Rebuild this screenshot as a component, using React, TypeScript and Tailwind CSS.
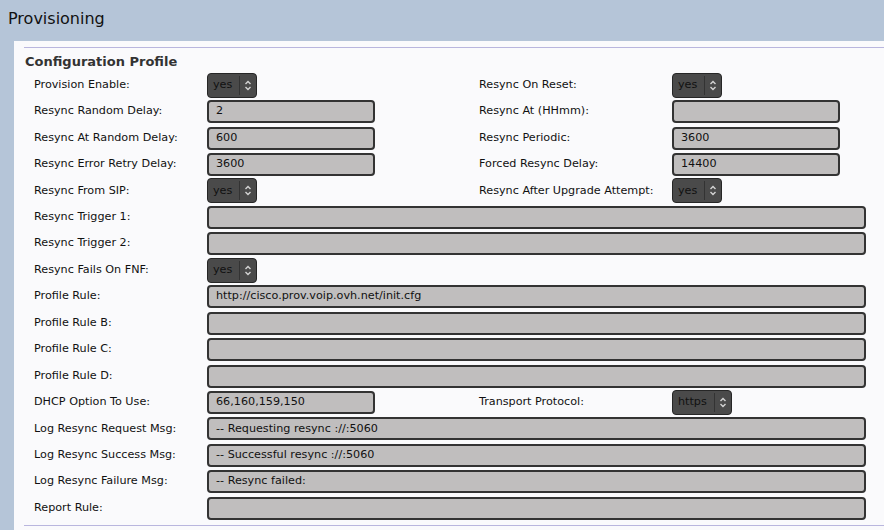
import React from "react";

type Row =
  | { kind: "pair"; left: [string, Ctl]; right: [string, Ctl] }
  | { kind: "full"; label: string; value: string }
  | { kind: "single"; label: string; ctl: Ctl };

type Ctl = { type: "select"; value: string; w?: string } | { type: "input"; value: string };

const rows: Row[] = [
  { kind: "pair", left: ["Provision Enable:", { type: "select", value: "yes" }], right: ["Resync On Reset:", { type: "select", value: "yes" }] },
  { kind: "pair", left: ["Resync Random Delay:", { type: "input", value: "2" }], right: ["Resync At (HHmm):", { type: "input", value: "" }] },
  { kind: "pair", left: ["Resync At Random Delay:", { type: "input", value: "600" }], right: ["Resync Periodic:", { type: "input", value: "3600" }] },
  { kind: "pair", left: ["Resync Error Retry Delay:", { type: "input", value: "3600" }], right: ["Forced Resync Delay:", { type: "input", value: "14400" }] },
  { kind: "pair", left: ["Resync From SIP:", { type: "select", value: "yes" }], right: ["Resync After Upgrade Attempt:", { type: "select", value: "yes" }] },
  { kind: "full", label: "Resync Trigger 1:", value: "" },
  { kind: "full", label: "Resync Trigger 2:", value: "" },
  { kind: "single", label: "Resync Fails On FNF:", ctl: { type: "select", value: "yes" } },
  { kind: "full", label: "Profile Rule:", value: "http://cisco.prov.voip.ovh.net/init.cfg" },
  { kind: "full", label: "Profile Rule B:", value: "" },
  { kind: "full", label: "Profile Rule C:", value: "" },
  { kind: "full", label: "Profile Rule D:", value: "" },
  { kind: "pair", left: ["DHCP Option To Use:", { type: "input", value: "66,160,159,150" }], right: ["Transport Protocol:", { type: "select", value: "https", w: "w-[60px]" }] },
  { kind: "full", label: "Log Resync Request Msg:", value: "-- Requesting resync ://:5060" },
  { kind: "full", label: "Log Resync Success Msg:", value: "-- Successful resync ://:5060" },
  { kind: "full", label: "Log Resync Failure Msg:", value: "-- Resync failed:" },
  { kind: "full", label: "Report Rule:", value: "" },
];

function Chevrons() {
  return (
    <svg width="8" height="11" viewBox="0 0 8 11" fill="none" stroke="#d4d4d4" strokeWidth="1.4">
      <path d="M1.5 4 L4 1.5 L6.5 4" />
      <path d="M1.5 7 L4 9.5 L6.5 7" />
    </svg>
  );
}

function Select({ value, w }: { value: string; w?: string }) {
  return (
    <div className={`${w ?? "w-[50px]"} h-[25px] flex items-center bg-[#4a4a4a] border border-[#262626] rounded-[4px] text-[#111] text-[11.2px]`}>
      <span className="flex-1 pl-[5px]">{value}</span>
      <span className="h-[19px] border-l border-[#333]" />
      <span className="w-[16px] flex justify-center">
        <Chevrons />
      </span>
    </div>
  );
}

function Input({ value, w }: { value: string; w: string }) {
  return (
    <div className={`${w} h-[23px] flex items-center bg-[#c0bebe] border-2 border-[#333] rounded-[4px] pl-[7px] text-[11.2px] text-[#111]`}>
      {value}
    </div>
  );
}

function Control({ c }: { c: Ctl }) {
  return c.type === "select" ? <Select value={c.value} w={c.w} /> : <Input value={c.value} w="w-[168px]" />;
}

export default function App() {
  return (
    <div className="w-[884px] h-[530px] overflow-hidden bg-[#b5c5d8]" style={{ fontFamily: '"DejaVu Sans", sans-serif' }}>
      <div className="h-[41px] pl-[8px] pt-[7px] text-[16px] text-[#111]">Provisioning</div>
      <div className="ml-[14px] bg-[#fafafc] pt-[6px] pl-[10px] h-[489px]">
        <div className="border-t border-[#b9b6de]">
          <div className="pl-[1px] pt-[6px] h-[24px] text-[13px] font-bold text-[#333] leading-[16px]">Configuration Profile</div>
          <div className="pl-[10px] text-[11.2px] text-[#111]">
            {rows.map((r, i) => (
              <div key={i} className="h-[26.45px] flex items-center">
                {r.kind === "pair" && (
                  <>
                    <div className="w-[445px] flex items-center">
                      <span className="w-[173px]">{r.left[0]}</span>
                      <Control c={r.left[1]} />
                    </div>
                    <span className="w-[193px]">{r.right[0]}</span>
                    <Control c={r.right[1]} />
                  </>
                )}
                {r.kind === "full" && (
                  <>
                    <span className="w-[173px]">{r.label}</span>
                    <Input value={r.value} w="w-[659px]" />
                  </>
                )}
                {r.kind === "single" && (
                  <>
                    <span className="w-[173px]">{r.label}</span>
                    <Control c={r.ctl} />
                  </>
                )}
              </div>
            ))}
          </div>
          <div className="mt-[4px] border-t border-[#b9b6de]" />
        </div>
      </div>
    </div>
  );
}
